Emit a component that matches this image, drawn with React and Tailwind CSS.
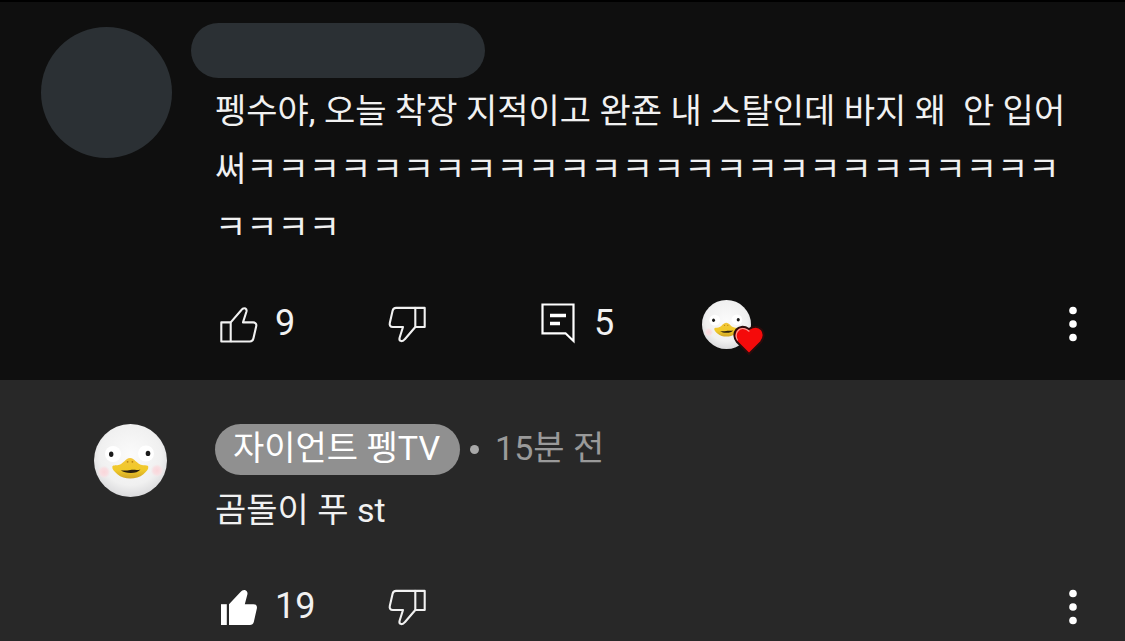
import React, { useId } from "react";

function ThumbIcon({ down = false, filled = false }) {
  return (
    <svg viewBox="0 0 42 42" className="h-[42px] w-[42px] shrink-0" aria-hidden="true">
      <g
        transform={down ? "rotate(180 21 21.7)" : undefined}
        fill={filled ? "#fff" : "none"}
        stroke={filled ? "none" : "#f1f1f1"}
        strokeWidth="2.1"
        strokeLinejoin="round"
      >
        {filled ? (
          <>
            <path d="M3 18.2H8.8V39H3Z" />
            <path d="M11 18.2L22.5 6C24 4.2 26 3.4 27.8 4.4C29.4 5.3 29.8 7 29.3 8.8L26.8 18.3H35.5C38.4 18.3 39.4 20.3 38.8 22.8L35.8 36C35.3 38 33.9 39 31.9 39H11Z" />
          </>
        ) : (
          <>
            <path d="M3.3 19.4H12.7V38.5H3.3Z" />
            <path d="M12.7 19.4L23.2 7.2C24.5 5.5 26 4.9 27.4 5.5C28.6 6.1 28.8 7.3 28.4 8.7L25 19.4H35.2C37.7 19.4 38.7 21.2 38.2 23.3L35.4 35.6C34.9 37.6 33.8 38.5 32 38.5H12.7" />
          </>
        )}
      </g>
    </svg>
  );
}

function RepliesIcon() {
  return (
    <svg viewBox="0 0 40 44" className="h-11 w-10 shrink-0" fill="none" aria-hidden="true">
      <path d="M3.5 2.5H34.5V39L26.5 31.3H3.5Z" stroke="#fff" strokeWidth="2.2" />
      <path d="M11 13.5H27M11 21.5H21" stroke="#fff" strokeWidth="3.4" />
    </svg>
  );
}

function BirdFace({ className }) {
  const id = useId();
  return (
    <svg viewBox="0 0 73 73" className={className} role="img" aria-label="자이언트 펭TV">
      <defs>
        <radialGradient id={id + "head"} cx="50%" cy="42%" r="60%">
          <stop offset="0%" stopColor="#fbfbfb" />
          <stop offset="70%" stopColor="#f0f0f0" />
          <stop offset="100%" stopColor="#d8d8da" />
        </radialGradient>
        <radialGradient id={id + "cheek"}>
          <stop offset="0%" stopColor="#fad6da" />
          <stop offset="60%" stopColor="#f8dfe2" />
          <stop offset="100%" stopColor="#f6e6e8" stopOpacity="0" />
        </radialGradient>
        <linearGradient id={id + "beak"} x1="0" y1="0" x2="0" y2="1">
          <stop offset="0%" stopColor="#f3c63a" />
          <stop offset="60%" stopColor="#f0c928" />
          <stop offset="100%" stopColor="#cfa426" />
        </linearGradient>
      </defs>
      <circle cx="36.5" cy="36.5" r="36.5" fill={`url(#${id}head)`} />
      <circle cx="19" cy="30" r="8" fill="#fff" />
      <circle cx="52" cy="29.5" r="8" fill="#fff" />
      <circle cx="10" cy="48" r="6.5" fill={`url(#${id}cheek)`} />
      <circle cx="63" cy="46.5" r="6.5" fill={`url(#${id}cheek)`} />
      <ellipse cx="17.2" cy="30.2" rx="2.2" ry="2.7" fill="#1b1b1b" />
      <ellipse cx="54" cy="29.4" rx="2.3" ry="2.7" fill="#1b1b1b" />
      <path
        d="M18.3 42.8C18.6 41 21.5 41.6 24.5 41C29.5 40 31.5 34 36 34C40.8 34 42.6 40 48 41C51 41.6 54 41 54.3 42.8C54.6 45.5 52.4 47.6 49.4 50.2C46 53.2 41 54.4 36.3 54.4C31.4 54.4 26.8 53.2 23.4 50.2C20.4 47.6 18 45.4 18.3 42.8Z"
        fill={`url(#${id}beak)`}
      />
      <circle cx="33.6" cy="37.8" r="0.9" fill="#b98414" />
      <circle cx="38.4" cy="37.8" r="0.9" fill="#b98414" />
      <path
        d="M26.8 46.2C30 47 33 46.5 36.3 46C40 45.5 43.5 46.4 46.5 45.4C44.5 48 40.5 49 36.5 48.9C32.5 48.8 29.3 48.2 26.8 46.2Z"
        fill="#2a1f0e"
      />
    </svg>
  );
}

function HeartBadge() {
  return (
    <svg viewBox="0 0 32 32" className="absolute top-[24px] left-[31px] h-8 w-8" aria-hidden="true">
      <path
        d="M16 30L4 18C-3 9.5 5 -2 16 5C27 -2 35 9.5 28 18Z"
        fill="#f50a0a"
        stroke="#2a0c0c"
        strokeWidth="2"
        strokeLinejoin="round"
      />
      <path
        d="M4.4 16C1 9.5 5.5 3.8 11 4.6C13 5 14.6 6 16 7.2"
        fill="none"
        stroke="#f79a94"
        strokeWidth="1.2"
        strokeLinecap="round"
      />
    </svg>
  );
}

function MoreButton() {
  return (
    <button type="button" aria-label="더보기" className="ml-auto flex h-14 w-10 items-center justify-center">
      <svg viewBox="0 0 8 36" className="h-9 w-2" fill="#fff" aria-hidden="true">
        <circle cx="4" cy="4.5" r="3.8" />
        <circle cx="4" cy="18" r="3.8" />
        <circle cx="4" cy="31.5" r="3.8" />
      </svg>
    </button>
  );
}

function Count({ children }) {
  return <span className="pb-[2px] text-[36px] leading-[42px]">{children}</span>;
}

function LikeButtons({ count, liked = false }) {
  return (
    <>
      <div className="w-[168px]">
        <button type="button" aria-label={`좋아요 ${count}`} className="flex items-center gap-[15px]">
          <ThumbIcon filled={liked} />
          <Count>{count}</Count>
        </button>
      </div>
      <div className="w-[153px]">
        <button type="button" aria-label="싫어요" className="flex items-center">
          <ThumbIcon down />
        </button>
      </div>
    </>
  );
}

export default function App() {
  return (
    <main
      lang="ko"
      className="flex min-h-screen flex-col bg-[#282828] font-['Roboto','Noto_Sans_CJK_KR',sans-serif] text-[34px] leading-[58px] text-[#f1f1f1]"
    >
      <article className="border-t-2 border-black bg-[#0f0f0f] pb-7">
        <div className="flex gap-[19px] pt-[21px] pr-12 pl-[41px]">
          <div className="mt-1 h-[131px] w-[131px] shrink-0 rounded-full bg-[#2b3034]" />
          <div className="min-w-0 flex-1">
            <div className="h-[55px] w-[294px] rounded-full bg-[#2b3034]" />
            <p className="mt-1 pl-6 whitespace-pre-wrap">
              {"펭수야, 오늘 착장 지적이고 완죤 내 스탈인데 바지 왜  안 입어써" + "ㅋ".repeat(30)}
            </p>
          </div>
        </div>
        <div className="mt-10 flex h-14 items-center pr-8 pl-[218px]">
          <LikeButtons count={9} />
          <div className="w-[163px]">
            <button type="button" aria-label="답글 5" className="flex items-center gap-[15px]">
              <RepliesIcon />
              <Count>5</Count>
            </button>
          </div>
          <button type="button" aria-label="하트" className="relative">
            <BirdFace className="h-[49px] w-[49px]" />
            <HeartBadge />
          </button>
          <MoreButton />
        </div>
      </article>

      <article>
        <div className="flex gap-12 pt-11 pr-12 pl-[94px]">
          <BirdFace className="h-[73px] w-[73px] shrink-0" />
          <div className="min-w-0 flex-1">
            <div className="flex items-center gap-[10px] text-[#9a9a9a]">
              <a
                href="#channel"
                className="flex h-[51px] items-center rounded-full bg-[#909090] pr-5 pb-1 pl-[18px] text-white"
              >
                자이언트 펭TV
              </a>
              <span className="h-[9px] w-[9px] rounded-full bg-[#a8a8a8]" />
              <span className="flex h-[51px] items-center pb-1 pl-[6px]">15분 전</span>
            </div>
            <p className="mt-[6px]">곰돌이 푸 st</p>
          </div>
        </div>
        <div className="mt-10 flex h-14 items-center pr-8 pl-[218px]">
          <LikeButtons count={19} liked />
          <MoreButton />
        </div>
      </article>
    </main>
  );
}
